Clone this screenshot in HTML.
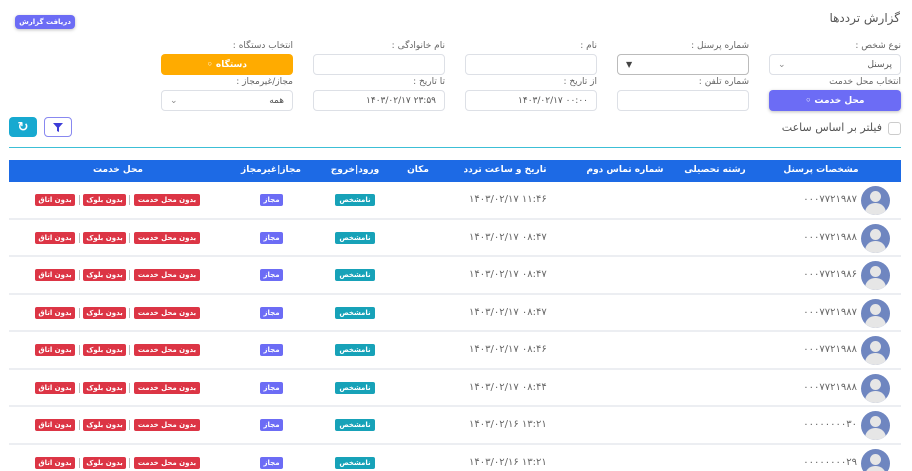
<!DOCTYPE html>
<html><head><meta charset="utf-8"><style>
*{box-sizing:border-box;margin:0;padding:0}
html,body{width:912px;height:471px;overflow:hidden}
body{background:#fff;font-family:"DejaVu Sans","Liberation Sans",sans-serif;color:#555;position:relative}
.a{position:absolute}
.lbl{position:absolute;font-size:9px;color:#666;text-align:right;direction:rtl;white-space:nowrap}
.inp{position:absolute;height:21px;border:1px solid #dde0e6;border-radius:4px;background:#fff;font-size:9px;color:#555;display:flex;align-items:center;padding:0 8px}
.btn{position:absolute;border-radius:4px;color:#fff;font-size:9px;font-weight:bold;display:flex;align-items:center;justify-content:center;direction:rtl}
.hd{position:absolute;top:160px;left:9px;width:892px;height:22px;background:#1d6ae5}
.hd span{position:absolute;top:5px;color:#fff;font-size:9px;font-weight:bold;white-space:nowrap;transform:translateX(-50%);direction:rtl}
.row{position:absolute;left:9px;width:892px;height:37.5px;border-bottom:2px solid #eceef2}
.bd{position:absolute;top:12px;height:12px;border-radius:2px;color:#fff;font-size:7px;font-weight:bold;display:flex;align-items:center;justify-content:center;direction:rtl;white-space:nowrap}
.r{background:#dc3545}.p{background:#6c6cf5}.t{background:#17a2b8}
.sep{position:absolute;top:13px;width:1px;height:10px;background:#bbb}
.txt{position:absolute;top:12px;font-size:10px;color:#666;white-space:nowrap}
.av{position:absolute;left:852px;top:4px;width:29px;height:29px;border-radius:50%;background:#6f86c0;overflow:hidden}
.av:before{content:"";position:absolute;left:9px;top:5px;width:11px;height:11px;border-radius:50%;background:#e6e6e6}
.av:after{content:"";position:absolute;left:4px;top:17px;width:21px;height:16px;border-radius:10px 10px 0 0;background:#e6e6e6}
</style></head><body>
<div class="a" style="right:12px;top:11px;font-size:12px;color:#555;direction:rtl">گزارش ترددها</div>
<div class="btn" style="left:15px;top:15px;width:60px;height:14px;background:#6c6cf5;font-size:7px;box-shadow:0 1px 3px rgba(0,0,0,.25)">دریافت گزارش</div>

<div class="lbl" style="right:11px;top:41px">نوع شخص :</div>
<div class="inp" style="left:769px;top:54px;width:132px;justify-content:space-between"><span style="color:#888">&#8964;</span><span>پرسنل</span></div>
<div class="lbl" style="right:163px;top:41px">شماره پرسنل :</div>
<div class="inp" style="left:617px;top:54px;width:132px;border-color:#bbb"><span style="font-size:8px;color:#444">&#9660;</span></div>
<div class="lbl" style="right:315px;top:41px">نام :</div>
<div class="inp" style="left:465px;top:54px;width:132px"></div>
<div class="lbl" style="right:467px;top:41px">نام خانوادگی :</div>
<div class="inp" style="left:313px;top:54px;width:132px"></div>
<div class="lbl" style="right:619px;top:41px">انتخاب دستگاه :</div>
<div class="btn" style="left:161px;top:54px;width:132px;height:21px;background:#ffab00">دستگاه ◦</div>

<div class="lbl" style="right:11px;top:77px">انتخاب محل خدمت</div>
<div class="btn" style="left:769px;top:90px;width:132px;height:21px;background:#6c6cf5;box-shadow:0 1px 3px rgba(0,0,0,.25)">محل خدمت ◦</div>
<div class="lbl" style="right:163px;top:77px">شماره تلفن :</div>
<div class="inp" style="left:617px;top:90px;width:132px"></div>
<div class="lbl" style="right:315px;top:77px">از تاریخ :</div>
<div class="inp" style="left:465px;top:90px;width:132px;justify-content:flex-end;direction:ltr">۱۴۰۳/۰۲/۱۷ ۰۰:۰۰</div>
<div class="lbl" style="right:467px;top:77px">تا تاریخ :</div>
<div class="inp" style="left:313px;top:90px;width:132px;justify-content:flex-end;direction:ltr">۱۴۰۳/۰۲/۱۷ ۲۳:۵۹</div>
<div class="lbl" style="right:619px;top:77px">مجاز/غیرمجاز :</div>
<div class="inp" style="left:161px;top:90px;width:132px;justify-content:space-between"><span style="color:#888">&#8964;</span><span>همه</span></div>

<div class="a" style="left:888px;top:122px;width:13px;height:13px;border:1px solid #ccc;border-radius:3px"></div>
<div class="a" style="right:30px;top:121px;font-size:11px;color:#555;direction:rtl">فیلتر بر اساس ساعت</div>
<div class="btn" style="left:9px;top:117px;width:28px;height:20px;background:#17a9d0;font-size:13px">&#8635;</div>
<div class="a" style="left:44px;top:117px;width:28px;height:20px;border:1px solid #8888f0;border-radius:4px;display:flex;align-items:center;justify-content:center"><svg width="10" height="9" viewBox="0 0 10 9"><path d="M0 0H10L6 4.5V9L4 8V4.5Z" fill="#3d3dd8"/></svg></div>
<div class="a" style="left:9px;top:147px;width:892px;height:1px;background:#3cbfd6"></div>

<div class="hd">
<span style="left:812px">مشخصات پرسنل</span>
<span style="left:706px">رشته تحصیلی</span>
<span style="left:616px">شماره تماس دوم</span>
<span style="left:496px">تاریخ و ساعت تردد</span>
<span style="left:409px">مکان</span>
<span style="left:346px">ورود|خروج</span>
<span style="left:262px">مجاز|غیرمجاز</span>
<span style="left:109px">محل خدمت</span>
</div>

<div id="rows"></div>
<script>
var d=[["۰۰۰۷۷۲۱۹۸۷","۱۴۰۳/۰۲/۱۷ ۱۱:۴۶"],["۰۰۰۷۷۲۱۹۸۸","۱۴۰۳/۰۲/۱۷ ۰۸:۴۷"],["۰۰۰۷۷۲۱۹۸۶","۱۴۰۳/۰۲/۱۷ ۰۸:۴۷"],["۰۰۰۷۷۲۱۹۸۷","۱۴۰۳/۰۲/۱۷ ۰۸:۴۷"],["۰۰۰۷۷۲۱۹۸۸","۱۴۰۳/۰۲/۱۷ ۰۸:۴۶"],["۰۰۰۷۷۲۱۹۸۸","۱۴۰۳/۰۲/۱۷ ۰۸:۴۴"],["۰۰۰۰۰۰۰۰۳۰","۱۴۰۳/۰۲/۱۶ ۱۳:۲۱"],["۰۰۰۰۰۰۰۰۲۹","۱۴۰۳/۰۲/۱۶ ۱۳:۲۱"]];
var h="";
d.forEach(function(r,i){
h+='<div class="row" style="top:'+(182+i*37.5)+'px">'+
'<div class="av"></div>'+
'<div class="txt" style="right:44px;direction:ltr">'+r[0]+'</div>'+
'<div class="txt" style="left:460px;direction:ltr">'+r[1]+'</div>'+
'<div class="bd t" style="left:326px;width:40px">نامشخص</div>'+
'<div class="bd p" style="left:251px;width:23px">مجاز</div>'+
'<div class="bd r" style="left:125px;width:66px">بدون محل خدمت</div>'+
'<div class="sep" style="left:120px"></div>'+
'<div class="bd r" style="left:74px;width:43px">بدون بلوک</div>'+
'<div class="sep" style="left:70px"></div>'+
'<div class="bd r" style="left:26px;width:40px">بدون اتاق</div>'+
'</div>';});
document.getElementById("rows").innerHTML=h;
</script>
</body></html>
